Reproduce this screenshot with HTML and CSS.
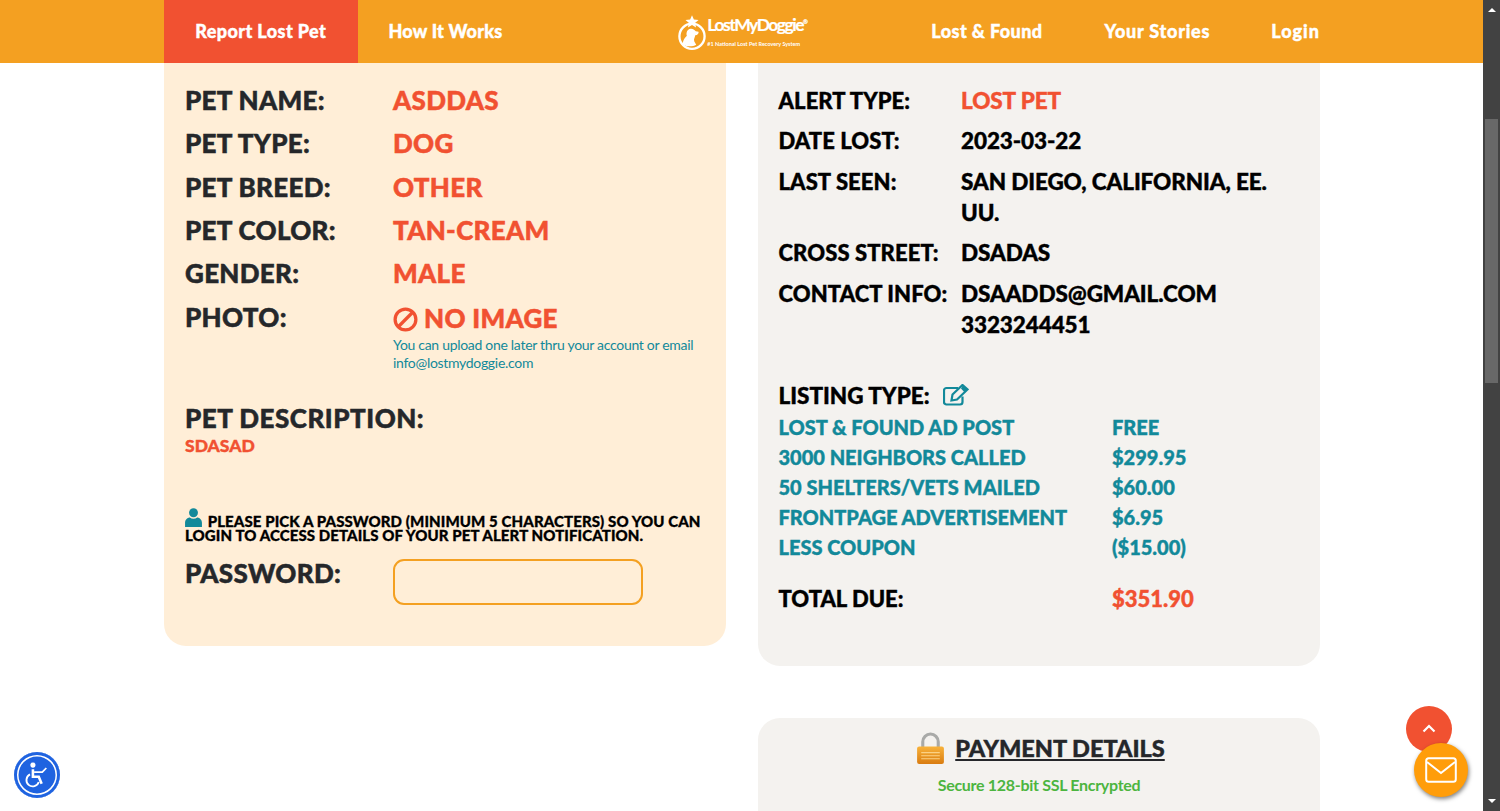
FILE: index.html
```html
<!DOCTYPE html>
<html lang="en">
<head>
  <meta charset="UTF-8" />
  <title>Lost My Doggie</title>
  <link rel="stylesheet" href="styles.css">
</head>
<body>
  <div class="page">
    <header class="topbar">
      <nav class="nav">
        <a class="nav-link nav-report" href="#">Report Lost Pet</a>
        <a class="nav-link nav-how" href="#">How It Works</a>
        <a class="logo" href="#">
          <svg class="logo-mark" viewBox="0 0 30 38">
            <path d="M15 0l2 4.600 5 .4-3.800 3.200 1.200 4.800L15 10.400 10.600 13l1.200-4.800L8 5l5-.4z" fill="#fff"/>
            <circle cx="15" cy="22.500" r="13.500" fill="none" stroke="#fff" stroke-width="2.500"/>
            <path d="M5 31c.500-5 2.500-7 4.500-9-1-2.500 0-7 4-7.500 2-.3 4 .800 5.500 2.500l3 .700c.500 2-1 3.500-3.500 3.800-.5 3-2 4-1 6.500l2 3.500c-4 2.500-10 2.500-14.500-.5z" fill="#fff"/>
          </svg>
          <span class="logo-text">
            <span class="logo-name">LostMyDoggie<sup class="logo-reg">®</sup></span>
            <span class="logo-tag">#1 National Lost Pet Recovery System</span>
          </span>
        </a>
        <a class="nav-link nav-found" href="#">Lost &amp; Found</a>
        <a class="nav-link nav-stories" href="#">Your Stories</a>
        <a class="nav-link nav-login" href="#">Login</a>
      </nav>
    </header>

    <main class="content">
      <section class="col">
        <div class="card card-pet">
          <div class="pet-row"><span class="pet-label">PET NAME:</span><span class="pet-value">ASDDAS</span></div>
          <div class="pet-row"><span class="pet-label">PET TYPE:</span><span class="pet-value">DOG</span></div>
          <div class="pet-row"><span class="pet-label">PET BREED:</span><span class="pet-value">OTHER</span></div>
          <div class="pet-row"><span class="pet-label">PET COLOR:</span><span class="pet-value">TAN-CREAM</span></div>
          <div class="pet-row"><span class="pet-label">GENDER:</span><span class="pet-value">MALE</span></div>
          <div class="pet-row pet-row-photo">
            <span class="pet-label">PHOTO:</span>
            <div>
              <div class="pet-value no-image">
                <svg class="ban-icon" viewBox="0 0 26 26">
                  <circle cx="13" cy="13" r="10.800" fill="none" stroke="#f15131" stroke-width="3.400"/>
                  <path d="M6 20L20 6" stroke="#f15131" stroke-width="3.400"/>
                </svg>
                NO IMAGE
              </div>
              <p class="photo-note">You can upload one later thru your account or email info@lostmydoggie.com</p>
            </div>
          </div>

          <h3 class="desc-title">PET DESCRIPTION:</h3>
          <p class="desc-text">SDASAD</p>

          <p class="pw-note">
            <svg class="user-icon" viewBox="0 0 16 18">
              <circle cx="8" cy="4.500" r="4.200" fill="#12899a"/>
              <path d="M0 18v-4c0-3 2.500-5 4.500-5 1 .8 2.200 1.200 3.500 1.200s2.500-.4 3.500-1.200c2 0 4.500 2 4.500 5v4z" fill="#12899a"/>
            </svg>
            PLEASE PICK A PASSWORD (MINIMUM 5 CHARACTERS) SO YOU CAN LOGIN TO ACCESS DETAILS OF YOUR PET ALERT NOTIFICATION.
          </p>
          <div class="pw-row">
            <label class="pet-label" for="pw">PASSWORD:</label>
            <input class="pw-input" id="pw" type="password" />
          </div>
        </div>
      </section>

      <section class="col">
        <div class="card card-alert">
          <div class="alert-row"><span class="alert-label">ALERT TYPE:</span><span class="alert-value alert-red">LOST PET</span></div>
          <div class="alert-row"><span class="alert-label">DATE LOST:</span><span class="alert-value">2023-03-22</span></div>
          <div class="alert-row"><span class="alert-label">LAST SEEN:</span><span class="alert-value">SAN DIEGO, CALIFORNIA, EE. UU.</span></div>
          <div class="alert-row"><span class="alert-label">CROSS STREET:</span><span class="alert-value">DSADAS</span></div>
          <div class="alert-row"><span class="alert-label">CONTACT INFO:</span><span class="alert-value">DSAADDS@GMAIL.COM<br>3323244451</span></div>

          <div class="listing-head">
            LISTING TYPE:
            <svg class="edit-icon" viewBox="0 0 26 22">
              <path d="M19.500 12.500V18a2.500 2.500 0 0 1-2.500 2.500H3.500A2.500 2.500 0 0 1 1 18V6.500A2.500 2.500 0 0 1 3.500 4H15" fill="none" stroke="#12899a" stroke-width="2.200"/>
              <path d="M9.500 10.500L19.500 1l5 4.500L14 15.500l-5.500 1z" fill="none" stroke="#12899a" stroke-width="2.200"/>
              <path d="M18 4.500l3.500 3.800L24.500 5.500 20 1z" fill="#12899a"/>
            </svg>
          </div>
          <div class="price-row"><span class="price-name">LOST &amp; FOUND AD POST</span><span>FREE</span></div>
          <div class="price-row"><span class="price-name">3000 NEIGHBORS CALLED</span><span>$299.95</span></div>
          <div class="price-row"><span class="price-name">50 SHELTERS/VETS MAILED</span><span>$60.00</span></div>
          <div class="price-row"><span class="price-name">FRONTPAGE ADVERTISEMENT</span><span>$6.95</span></div>
          <div class="price-row"><span class="price-name">LESS COUPON</span><span>($15.00)</span></div>
          <div class="total-row"><span class="total-name">TOTAL DUE:</span><span class="alert-red">$351.90</span></div>
        </div>

        <div class="card card-pay">
          <h2 class="pay-title">
            <svg class="lock-icon" viewBox="0 0 28 32">
              <defs>
                <linearGradient id="lockBody" x1="0" y1="0" x2="0" y2="1">
                  <stop offset="0" stop-color="#f8b23a"/>
                  <stop offset="1" stop-color="#d97c10"/>
                </linearGradient>
              </defs>
              <path d="M6.500 15V9.500a7.500 7.500 0 0 1 15 0V15" fill="none" stroke="#a9aaa8" stroke-width="3"/>
              <rect x="1" y="14" width="26" height="17" rx="2" fill="url(#lockBody)"/>
              <path d="M5 20h18M5 23h18M5 26h18" stroke="#fbd184" stroke-width="1"/>
            </svg>
            <span class="pay-text">PAYMENT DETAILS</span>
          </h2>
          <p class="pay-secure">Secure 128-bit SSL Encrypted</p>
        </div>
      </section>
    </main>

    <a class="access-btn" href="#">
      <svg viewBox="0 0 24 24" class="access-icon">
        <circle cx="8.500" cy="3.500" r="2.200" fill="#fff"/>
        <path d="M8.500 7v6.500h5l2.500 6" fill="none" stroke="#fff" stroke-width="2.200"/>
        <path d="M6 11.500a5.400 5.400 0 1 0 7.500 6.500" fill="none" stroke="#fff" stroke-width="1.600"/>
        <path d="M9.500 9.500h7l3.500-3.500" fill="none" stroke="#fff" stroke-width="1.500"/>
      </svg>
    </a>
    <a class="top-btn" href="#">
      <svg viewBox="0 0 14 9" class="top-icon"><path d="M1.500 7.500L7 2l5.500 5.500" fill="none" stroke="#fff" stroke-width="2.200"/></svg>
    </a>
    <a class="mail-btn" href="#">
      <svg viewBox="0 0 32 26" class="mail-icon">
        <rect x="1.200" y="1.200" width="29.600" height="23.600" rx="2.500" fill="none" stroke="#fff" stroke-width="2"/>
        <path d="M2 5l14 11L30 5" fill="none" stroke="#fff" stroke-width="2"/>
      </svg>
    </a>
  </div>

  <div class="scrollbar">
    <span class="arrow-up"></span>
    <span class="thumb"></span>
    <span class="arrow-down"></span>
  </div>
</body>
</html>
```

FILE: styles.css
```css
html, body {
  height: 100%;
}

body {
  margin: 0;
  display: flex;
  height: 811px;
  overflow: hidden;
  font-family: 'Lato', sans-serif;
  background-color: #fff;
  color: #222;
}

p, h2, h3 {
  margin: 0;
}

a {
  text-decoration: none;
}

.page {
  position: relative;
  flex: 1;
  overflow: hidden;
}

/* top bar */
.topbar {
  background-color: #f4a021;
  height: 63px;
  padding: 0 163px 0 164px;
}

.nav {
  display: flex;
  align-items: center;
  height: 100%;
}

.nav-link {
  color: #fff;
  font-size: 18px;
  font-weight: 900;
  line-height: 20px;
  letter-spacing: 0.4px;
  -webkit-text-stroke: 0.4px #fff;
  white-space: nowrap;
  padding-bottom: 2px;
}

.nav-report {
  background-color: #f15131;
  height: 100%;
  width: 194px;
  box-sizing: border-box;
  display: flex;
  align-items: center;
  justify-content: center;
}

.nav-how {
  margin-left: 31px;
  letter-spacing: 0.2px;
}

.logo {
  display: flex;
  align-items: center;
  gap: 1px;
  margin-left: 176px;
  width: 126px;
  flex-shrink: 0;
  color: #fff;
  height: 100%;
}

.logo-mark {
  width: 28px;
  height: 36px;
  flex-shrink: 0;
  margin-top: 2px;
}

.logo-name {
  display: block;
  font-size: 17.500px;
  font-weight: 700;
  line-height: 20px;
  letter-spacing: -1.500px;
  -webkit-text-stroke: 0.2px #fff;
  white-space: nowrap;
}

.logo-reg {
  font-size: 6px;
  line-height: 0;
}

.logo-tag {
  display: block;
  font-size: 5.500px;
  font-weight: 700;
  line-height: 9px;
  margin-top: 5px;
  white-space: nowrap;
}

.nav-found {
  margin-left: 127px;
}

.nav-stories {
  margin-left: 62px;
  letter-spacing: 0.75px;
}

.nav-login {
  margin-left: 61px;
  letter-spacing: 1px;
}

/* columns */
.content {
  display: grid;
  grid-template-columns: 562px 562px;
  gap: 32px;
  padding: 0 163px 0 164px;
}

.col {
  display: flex;
  flex-direction: column;
  gap: 52px;
  align-items: stretch;
}

.card {
  border-radius: 0 0 22px 22px;
}

.card-pet {
  background-color: #ffeed7;
  height: 583px;
  box-sizing: border-box;
  padding: 16px 21px 0;
}

.pet-row {
  display: flex;
  height: 43.300px;
  line-height: 43.300px;
}

.pet-label {
  width: 208px;
  flex-shrink: 0;
  font-size: 26px;
  font-weight: 900;
  letter-spacing: 0.3px;
  -webkit-text-stroke: 0.5px #25272a;
  color: #25272a;
}

.pet-value {
  font-size: 26px;
  font-weight: 900;
  letter-spacing: 0.3px;
  -webkit-text-stroke: 0.5px #f15131;
  color: #f15131;
}

.pet-row-photo {
  height: auto;
}

.pet-row-photo .pet-label {
  padding-top: 1px;
}

.no-image {
  display: flex;
  align-items: center;
  gap: 6px;
  line-height: 43.300px;
  margin-top: 2px;
}

.ban-icon {
  width: 25px;
  height: 25px;
}

.photo-note {
  width: 312px;
  font-size: 14px;
  line-height: 18px;
  letter-spacing: -0.3px;
  color: #12899a;
  margin-top: -5px;
}

.desc-title {
  font-size: 26px;
  font-weight: 900;
  letter-spacing: 0.5px;
  -webkit-text-stroke: 0.5px #25272a;
  color: #25272a;
  line-height: 32px;
  margin-top: 30px;
}

.desc-text {
  font-size: 17.500px;
  font-weight: 900;
  -webkit-text-stroke: 0.4px #f15131;
  color: #f15131;
  line-height: 22px;
  margin-top: 1px;
}

.pw-note {
  font-size: 15px;
  font-weight: 900;
  letter-spacing: 0.1px;
  -webkit-text-stroke: 0.3px #000;
  line-height: 14.500px;
  color: #000;
  margin-top: 51px;
}

.user-icon {
  width: 17px;
  height: 19px;
  margin-right: 2px;
}

.pw-row {
  display: flex;
  align-items: flex-start;
  margin-top: 16px;
}

.pw-row .pet-label {
  line-height: 32px;
  margin-top: -2px;
}

.pw-input {
  width: 250px;
  height: 46px;
  box-sizing: border-box;
  border: 2px solid #f4a021;
  border-radius: 11px;
  background-color: #ffeed7;
}

.card-alert {
  background-color: #f4f2ef;
  height: 603px;
  box-sizing: border-box;
  padding: 21.500px 20.500px 0;
  color: #000;
  -webkit-text-stroke: 0.4px currentColor;
}

.alert-row {
  display: flex;
  font-size: 22.500px;
  font-weight: 900;
  letter-spacing: -0.1px;
  line-height: 31px;
  margin-bottom: 9.500px;
}

.alert-label {
  width: 182.500px;
  flex-shrink: 0;
  font-size: 22px;
  letter-spacing: 0.1px;
  white-space: nowrap;
}

.alert-value {
  width: 330px;
}

.alert-red {
  color: #f15131;
}

.listing-head {
  display: flex;
  align-items: center;
  gap: 13px;
  font-size: 22.500px;
  font-weight: 900;
  line-height: 30px;
  margin-top: 41px;
}

.edit-icon {
  width: 26px;
  height: 22px;
  margin-top: -2px;
}

.price-row {
  display: flex;
  font-size: 20px;
  font-weight: 900;
  line-height: 30px;
  color: #12899a;
  margin-top: 1px;
  margin-bottom: -1px;
}

.price-name {
  width: 333.500px;
  white-space: nowrap;
}

.total-row {
  display: flex;
  font-size: 22px;
  font-weight: 900;
  line-height: 30px;
  margin-top: 23px;
}

.total-name {
  width: 333.500px;
}

.card-pay {
  background-color: #f4f2ef;
  border-radius: 22px 22px 0 0;
  height: 120px;
  padding-top: 13px;
  box-sizing: border-box;
}

.pay-title {
  display: flex;
  align-items: center;
  justify-content: center;
  gap: 10px;
  font-size: 23.500px;
  font-weight: 900;
  -webkit-text-stroke: 0.4px #25272a;
  color: #25272a;
  line-height: 34px;
  margin-left: 3px;
}

.pay-text {
  text-decoration: underline;
}

.lock-icon {
  width: 29px;
  height: 33px;
}

.pay-secure {
  text-align: center;
  font-size: 16px;
  font-weight: 700;
  letter-spacing: -0.3px;
  color: #4cb53f;
  line-height: 20px;
  margin-top: 10px;
}

/* floating buttons */
.access-btn {
  position: absolute;
  left: 14px;
  top: 752px;
  width: 46px;
  height: 46px;
  box-sizing: border-box;
  border-radius: 50%;
  background-color: #1f63e0;
  box-shadow: inset 0 0 0 3px #1f63e0, inset 0 0 0 4.500px #fff;
  display: flex;
  align-items: center;
  justify-content: center;
}

.access-icon {
  width: 28px;
  height: 28px;
}

.top-btn {
  position: absolute;
  left: 1406px;
  top: 706px;
  width: 46px;
  height: 46px;
  border-radius: 50%;
  background-color: #f15131;
  display: flex;
  align-items: center;
  justify-content: center;
}

.top-icon {
  width: 14px;
  height: 9px;
  margin-top: -2px;
}

.mail-btn {
  position: absolute;
  left: 1414px;
  top: 743px;
  width: 54px;
  height: 54px;
  border-radius: 50%;
  background-color: #ff9d0a;
  box-shadow: 1px 2px 4px rgba(0,0,0,0.5);
  display: flex;
  align-items: center;
  justify-content: center;
}

.mail-icon {
  width: 32px;
  height: 26px;
}

/* scrollbar */
.scrollbar {
  width: 17px;
  flex-shrink: 0;
  background-color: #424242;
  display: flex;
  flex-direction: column;
  align-items: center;
  padding-top: 8px;
  box-sizing: border-box;
}

.arrow-up {
  border: 4px solid transparent;
  border-top: 0;
  border-bottom: 4px solid #fff;
  width: 0;
}

.thumb {
  width: 13px;
  height: 264px;
  background-color: #686868;
  margin-top: 107px;
}

.arrow-down {
  border: 4px solid transparent;
  border-bottom: 0;
  border-top: 4px solid #fff;
  width: 0;
  margin-top: auto;
  margin-bottom: 8px;
}
```
